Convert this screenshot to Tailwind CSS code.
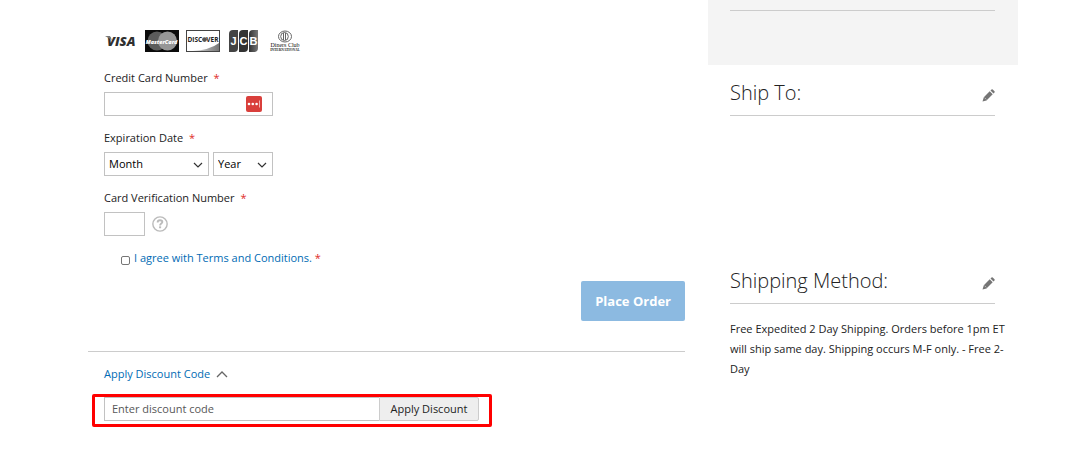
<!DOCTYPE html>
<html lang="en">
<head>
<meta charset="utf-8">
<title>Checkout</title>
<meta name="viewport" content="width=device-width, initial-scale=1">
<script src="https://cdn.jsdelivr.net/npm/@tailwindcss/browser@4"></script>
</head>
<body class="bg-white font-['Open_Sans','Noto_Sans',sans-serif] text-[11px] leading-5 text-[#222222]">
<div class="flex gap-[23px] pl-[88px] pr-[74px]">
  <main class="min-w-0 flex-1 pt-[30px]">
    <form class="pl-4">
      <ul class="mb-4 flex gap-[7px]">
        <li><svg class="block" width="34" height="22" viewBox="0 0 34 22" role="img" aria-label="Visa">
          <text x="3" y="16" font-family="Open Sans" font-size="13" font-weight="800" font-style="italic" fill="#2f2f2f">VISA</text>
          <path d="M1 6h5l2 4z" fill="#777"/></svg></li>
        <li><svg class="block" width="34" height="22" viewBox="0 0 34 22" role="img" aria-label="MasterCard">
          <rect width="34" height="22" fill="#0b0b0b"/><circle cx="12" cy="11" r="9.5" fill="#5c5c5c"/><circle cx="22.5" cy="11" r="9.5" fill="#969696"/>
          <text x="16.5" y="13.5" text-anchor="middle" font-family="Open Sans" font-size="5.5" font-weight="800" font-style="italic" fill="#fff">MasterCard</text></svg></li>
        <li><svg class="block" width="34" height="22" viewBox="0 0 34 22" role="img" aria-label="Discover">
          <defs><linearGradient id="dg"><stop stop-color="#ddd"/><stop offset="1" stop-color="#777"/></linearGradient></defs>
          <path d="M6 21Q24 20 33 13V21z" fill="url(#dg)"/><rect x=".5" y=".5" width="33" height="21" fill="none" stroke="#444"/>
          <text x="1.5" y="12" font-family="Open Sans" font-size="6.5" font-weight="700" fill="#222">DISC</text>
          <circle cx="18.5" cy="9.6" r="2.4" fill="#555"/>
          <text x="32.5" y="12" text-anchor="end" font-family="Open Sans" font-size="6.5" font-weight="700" fill="#222">VER</text></svg></li>
        <li><svg class="block" width="34" height="22" viewBox="0 0 34 22" role="img" aria-label="JCB">
          <defs><linearGradient id="jg"><stop stop-color="#333"/><stop offset="1" stop-color="#777"/></linearGradient></defs>
          <path d="M2 4q0-4 4-4h5v18q0 4-4 4H2z" fill="#444"/><path d="M12 4q0-4 4-4h5v18q0 4-4 4h-5z" fill="#333"/><path d="M22 4q0-4 4-4h5v18q0 4-4 4h-5z" fill="url(#jg)"/>
          <g font-family="Liberation Sans" font-size="11" font-weight="700" fill="#fff" text-anchor="middle"><text x="6.500" y="15">J</text><text x="16.500" y="15">C</text><text x="26.500" y="15">B</text></g></svg></li>
        <li><svg class="block" width="34" height="22" viewBox="0 0 34 22" role="img" aria-label="Diners Club International">
          <ellipse cx="17" cy="6.5" rx="6.5" ry="5.5" fill="#fff" stroke="#666"/><ellipse cx="16.5" cy="6.5" rx="3.8" ry="4" fill="#fff" stroke="#666"/><path d="M15.5 3v7M17.5 3v7" stroke="#666"/>
          <text x="17" y="17" text-anchor="middle" font-family="Liberation Serif" font-size="6" fill="#111">Diners Club</text>
          <text x="17" y="21" text-anchor="middle" font-family="Liberation Serif" font-size="3.5" font-weight="700" fill="#222">INTERNATIONAL</text></svg></li>
      </ul>

      <div class="mb-3">
        <label for="card" class="mb-1 block font-medium">Credit Card Number <span class="ml-[3px] font-normal text-[#e02b27]">*</span></label>
        <div class="relative h-6 w-[169px]">
          <input id="card" class="block h-6 w-full border border-[#c2c2c2] px-2">
          <svg class="absolute right-[11px] top-1" width="16" height="16" viewBox="0 0 16 16" aria-hidden="true"><rect width="16" height="16" rx="2" fill="#d93f3b"/><circle cx="3" cy="8" r="1.3" fill="#fff"/><circle cx="6.8" cy="8" r="1.3" fill="#fff"/><circle cx="10.6" cy="8" r="1.3" fill="#fff"/><path d="M13.5 4.5v7" stroke="#f3b0ae"/></svg>
        </div>
      </div>

      <div class="mb-3">
        <label for="month" class="mb-1 block font-medium">Expiration Date <span class="ml-[3px] font-normal text-[#e02b27]">*</span></label>
        <div class="flex gap-1">
          <div class="relative w-[105px]">
            <select id="month" class="block h-6 w-full appearance-none border border-[#c2c2c2] bg-white pl-1 text-black"><option>Month</option></select>
            <svg class="pointer-events-none absolute right-[6px] top-[10px]" width="10" height="7" viewBox="0 0 10 7" fill="none" stroke="#333" stroke-width="1.2"><path d="M1 1l4 4 4-4"/></svg>
          </div>
          <div class="relative w-[60px]">
            <select aria-label="Year" class="block h-6 w-full appearance-none border border-[#c2c2c2] bg-white pl-1 text-black"><option>Year</option></select>
            <svg class="pointer-events-none absolute right-[6px] top-[10px]" width="10" height="7" viewBox="0 0 10 7" fill="none" stroke="#333" stroke-width="1.2"><path d="M1 1l4 4 4-4"/></svg>
          </div>
        </div>
      </div>

      <div class="mb-3">
        <label for="cvv" class="mb-1 block font-medium">Card Verification Number <span class="ml-[3px] font-normal text-[#e02b27]">*</span></label>
        <div class="flex items-center gap-[7px]">
          <input id="cvv" class="block h-6 w-[41px] border border-[#c2c2c2] px-1">
          <button type="button" aria-label="What is this?"><svg class="block" width="16" height="16" viewBox="0 0 17 17" fill="none" stroke="#bbb"><circle cx="8.5" cy="8.5" r="7.6" stroke-width="1.5"/><path d="M6 6.8q0-2.300 2.500-2.300T11 6.500c0 1.500-2.400 1.600-2.400 3.500" stroke-width="2"/><path d="M8.600 11v2" stroke-width="2.200"/></svg></button>
        </div>
      </div>

      <div class="flex items-center gap-1 pl-[17px]">
        <input id="agree" type="checkbox" class="mt-[5px] size-[9px] appearance-none rounded-[2px] border border-[#767676] bg-white checked:bg-[#006bb4]">
        <label for="agree" class="text-[#006bb4]">I agree with Terms and Conditions. <span class="text-[#e02b27]">*</span></label>
      </div>
      <div class="mt-[13px] flex justify-end">
        <button type="button" class="h-10 rounded-[2px] bg-[#8cbae1] px-[14px] text-[13px] font-bold text-white">Place Order</button>
      </div>
    </form>

    <section class="mt-[30px] border-t border-[#cccccc] pt-3">
      <button type="button" class="ml-4 flex items-center gap-[6px] text-[#006bb4]">Apply Discount Code
        <svg width="12" height="7" viewBox="0 0 12 7" fill="none" stroke="#666" stroke-width="1.3"><path d="M1 6l5-5 5 5"/></svg></button>
      <form class="ml-1 mt-[10px] flex w-[400px] rounded-[2px] border-3 border-[#ff0000] pb-[3px] pl-[9px] pr-[10px]">
        <input aria-label="Enter discount code" placeholder="Enter discount code" class="h-6 min-w-0 flex-1 border border-r-0 border-[#c2c2c2] px-[7px] pb-[2px] placeholder:text-[#575757]">
        <button type="button" class="h-6 w-[100px] rounded-r-[2px] border border-[#cccccc] bg-[#eeeeee] font-medium">Apply Discount</button>
      </form>
    </section>
  </main>

  <aside class="w-[310px] shrink-0">
    <div class="h-[65px] bg-[#f4f4f4] px-[22px] pt-[10px]"><hr class="mr-px border-[#cccccc]"></div>
    <section class="ml-[22px] mr-[23px] h-[188px] pt-[10px]">
      <div class="flex h-[41px] items-center justify-between border-b border-[#cccccc] pb-1">
        <h2 class="text-xl font-light">Ship To:</h2>
        <button type="button" aria-label="Edit shipping address" class="mt-1"><svg class="block" width="13" height="13" viewBox="0 0 13 13" fill="#757575"><path d="M.5 12.500l1.300-4.300L7.700 2.300l3 3-6.200 6.200zM8.500 1.500l1-1q.6-.5 1.200 0l1.800 1.800q.5.600 0 1.200l-1 1z"/><path d="M2.600 8.700l1.700 1.700" stroke="#fff" stroke-width=".5"/></svg></button>
      </div>
    </section>
    <section class="ml-[22px] mr-[23px] pt-[10px]">
      <div class="flex h-[41px] items-center justify-between border-b border-[#cccccc] pb-1">
        <h2 class="text-xl font-light">Shipping Method:</h2>
        <button type="button" aria-label="Edit shipping method" class="mt-1"><svg class="block" width="13" height="13" viewBox="0 0 13 13" fill="#757575"><path d="M.5 12.500l1.300-4.300L7.700 2.300l3 3-6.200 6.200zM8.500 1.500l1-1q.6-.5 1.200 0l1.800 1.800q.5.600 0 1.200l-1 1z"/><path d="M2.600 8.700l1.700 1.700" stroke="#fff" stroke-width=".5"/></svg></button>
      </div>
      <p class="-mr-4 mt-[15px]">Free Expedited 2 Day Shipping. Orders before 1pm ET will ship same day. Shipping occurs M-F only. - Free 2-Day</p>
    </section>
  </aside>
</div>
</body>
</html>
